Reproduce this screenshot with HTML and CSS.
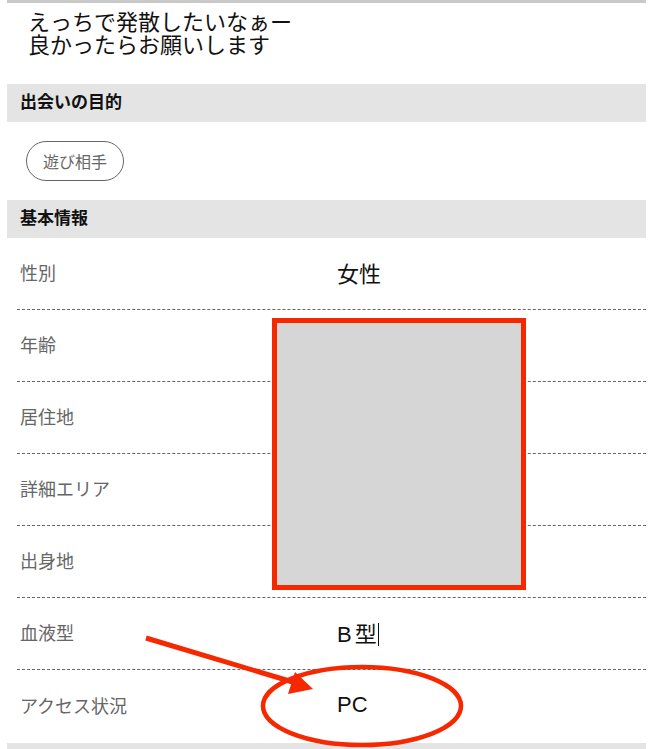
FILE: index.html
```html
<!DOCTYPE html>
<html lang="ja">
<head>
    <meta charset="UTF-8">
    <meta name="viewport" content="width=device-width, initial-scale=1.0">
    <title>プロフィール</title>
    <link rel="stylesheet" href="styles.css">
</head>
<body>
    <div class="profile">
        <div class="top-bar"></div>

        <div class="intro">
            <p>えっちで発散したいなぁー</p>
            <p>良かったらお願いします</p>
        </div>

        <h2 class="section-title">出会いの目的</h2>
        <div class="tags">
            <span class="tag">遊び相手</span>
        </div>

        <h2 class="section-title">基本情報</h2>
        <div class="info-row">
            <span class="info-label">性別</span>
            <span class="info-value">女性</span>
        </div>
        <div class="info-row">
            <span class="info-label">年齢</span>
            <span class="info-value"></span>
        </div>
        <div class="info-row">
            <span class="info-label">居住地</span>
            <span class="info-value"></span>
        </div>
        <div class="info-row">
            <span class="info-label">詳細エリア</span>
            <span class="info-value"></span>
        </div>
        <div class="info-row">
            <span class="info-label">出身地</span>
            <span class="info-value"></span>
        </div>
        <div class="info-row">
            <span class="info-label">血液型</span>
            <span class="info-value"><span class="blood">B</span>型<span class="caret"></span></span>
        </div>
        <div class="info-row last">
            <span class="info-label">アクセス状況</span>
            <span class="info-value">PC</span>
        </div>

        <div class="bottom-bar"></div>

        <!-- 伏せ字ボックス -->
        <div class="mask"></div>
    </div>

    <!-- 注釈（矢印と丸） -->
    <svg class="marks" width="660" height="749" viewBox="0 0 660 749">
        <line x1="146" y1="638" x2="296" y2="683" stroke="#f52800" stroke-width="5"/>
        <polygon points="313,689 288,694 295,672" fill="#f52800"/>
        <ellipse cx="362" cy="706" rx="99" ry="39" fill="none" stroke="#f52800" stroke-width="4.5"/>
    </svg>
</body>
</html>
```

FILE: styles.css
```css
body {
    font-family: "Liberation Sans", "Noto Sans CJK JP", sans-serif;
    background-color: #fff;
    color: #111;
    margin: 0;
    padding: 0;
    position: relative;
    height: 749px;
    overflow: hidden;
}
.profile {
    position: relative;
    width: 639px;
    margin-left: 7px;
}
.top-bar {
    height: 3px;
    background-color: #c9c9c9;
}
.intro {
    padding: 8px 0 0 21px;
    margin-bottom: 27px;
    font-size: 22px;
    line-height: 23px;
}
.intro p {
    margin: 0;
}
.section-title {
    margin: 0;
    height: 38px;
    line-height: 38px;
    padding-left: 13px;
    background-color: #e4e4e4;
    font-size: 17px;
    font-weight: bold;
    color: #111;
}
.tags {
    padding: 19px 0 19px 19px;
}
.tag {
    display: flex;
    align-items: center;
    justify-content: center;
    width: 98px;
    height: 40px;
    box-sizing: border-box;
    border: 1px solid #666;
    border-radius: 20px;
    font-size: 16px;
    color: #666;
}
.info-row {
    display: flex;
    align-items: center;
    height: 72px;
    box-sizing: border-box;
    padding-bottom: 3px;
    margin-left: 10px;
    border-bottom: 1px dashed #666;
}
.info-row.last {
    height: 73px;
    border-bottom: none;
}
.info-label {
    width: 320px;
    padding-left: 3px;
    box-sizing: border-box;
    font-size: 18px;
    color: #666;
}
.info-value {
    font-size: 22px;
    color: #111;
}
.blood {
    margin-right: 3px;
}
.caret {
    display: inline-block;
    width: 1px;
    height: 23px;
    margin-left: 1px;
    vertical-align: -4px;
    background-color: #111;
}
.bottom-bar {
    height: 8px;
    background-color: #e4e4e4;
}
.mask {
    position: absolute;
    left: 265px;
    top: 318px;
    width: 254px;
    height: 272px;
    box-sizing: border-box;
    border: 5px solid #f52800;
    background-color: #d6d6d6;
}
.marks {
    position: absolute;
    top: 0;
    left: 0;
    pointer-events: none;
}
```
